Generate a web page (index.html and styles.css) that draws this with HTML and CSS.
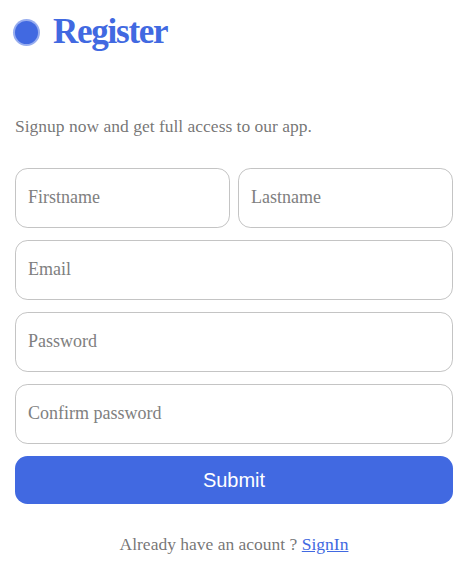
FILE: index.html
```html
<!DOCTYPE html>
<html>
<head>
<meta charset="utf-8">
<link rel="stylesheet" href="styles.css">
</head>
<body>
<form class="form">
  <p class="title">Register</p>
  <p class="message">Signup now and get full access to our app.</p>
  <div class="row">
    <label class="field"><span class="placeholder">Firstname</span></label>
    <label class="field"><span class="placeholder">Lastname</span></label>
  </div>
  <label class="field"><span class="placeholder">Email</span></label>
  <label class="field"><span class="placeholder">Password</span></label>
  <label class="field"><span class="placeholder">Confirm password</span></label>
  <button type="button" class="submit">Submit</button>
  <p class="signin">Already have an acount ? <a href="#">SignIn</a></p>
</form>
</body>
</html>
```

FILE: styles.css
```css
html, body {
  margin: 0;
  padding: 0;
  background: #fff;
}
body {
  font-family: "Liberation Serif", "Times New Roman", serif;
}
.form {
  display: flex;
  flex-direction: column;
  gap: 12px;
  padding: 12px 15px 0 15px;
}
.title {
  margin: 0;
  position: relative;
  display: flex;
  align-items: center;
  height: 40px;
  padding-left: 38px;
  font-size: 35px;
  font-weight: 700;
  letter-spacing: -1.25px;
  color: royalblue;
}
.title::before {
  content: "";
  position: absolute;
  left: 0;
  top: 50%;
  width: 23px;
  height: 23px;
  margin-top: -11px;
  border-radius: 50%;
  background: royalblue;
  box-shadow: 0 0 0 2px rgba(65, 105, 225, 0.55);
}
.message {
  margin: 52px 0 19px 0;
  font-size: 17.5px;
  color: rgba(88, 87, 87, 0.822);
}
.row {
  display: flex;
  gap: 8px;
}
.row .field {
  flex: 1;
}
.field {
  display: block;
  position: relative;
  height: 60px;
  box-sizing: border-box;
  border: 1px solid rgba(105, 105, 105, 0.397);
  border-radius: 12.5px;
}
.placeholder {
  position: absolute;
  left: 12px;
  top: 18px;
  font-size: 18px;
  color: grey;
}
.submit {
  height: 48px;
  border: none;
  border-radius: 12.5px;
  background: royalblue;
  color: #fff;
  font-family: "Liberation Sans", Arial, sans-serif;
  font-size: 20px;
}
.signin {
  margin: 18px 0 0 0;
  text-align: center;
  font-size: 17.5px;
  color: rgba(88, 87, 87, 0.822);
}
.signin a {
  color: royalblue;
}
```
